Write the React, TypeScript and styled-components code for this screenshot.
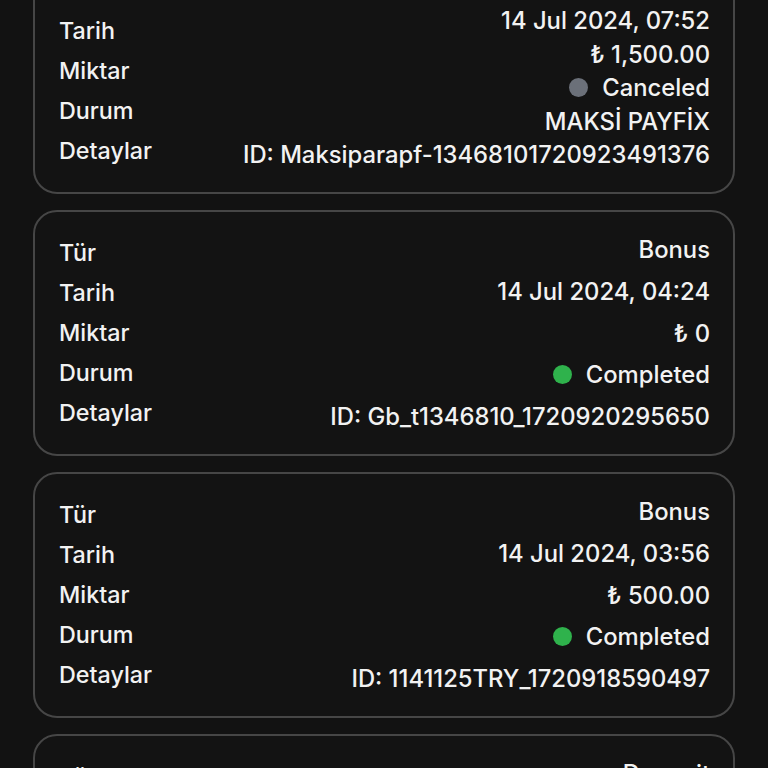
import React from "react";
import styled, { createGlobalStyle } from "styled-components";

const Global = createGlobalStyle`
  html, body { margin: 0; padding: 0; background: #121212; overflow: hidden; }
  body { font-family: Inter, "Noto Sans", "Liberation Sans", sans-serif; color: #f2f2f2; }
`;

const List = styled.div`
  display: flex;
  flex-direction: column;
  gap: 16px;
  padding: 0 33px;
  margin-top: -52px;
`;

const Card = styled.div`
  border: 2px solid #464646;
  border-radius: 24px;
  background: #131313;
  padding: 21px 23px 21px 24px;
  display: grid;
  grid-template-columns: auto 1fr;
`;

const Labels = styled.div`
  display: flex;
  flex-direction: column;
`;

const Label = styled.div`
  font-size: 23.3px;
  font-weight: 500;
  line-height: 40px;
  height: 40px;
`;

const Values = styled.div`
  display: flex;
  flex-direction: column;
  justify-content: space-between;
  align-items: flex-end;
`;

const Value = styled.div`
  font-size: 23.8px;
  font-weight: 500;
  line-height: 33px;
  display: flex;
  align-items: center;
  gap: 14px;
  white-space: nowrap;
`;

const Dot = styled.span<{ $color: string }>`
  width: 19px;
  height: 19px;
  border-radius: 50%;
  background: ${(p) => p.$color};
  display: inline-block;
`;

type Tx = {
  type: string;
  date: string;
  amount: string;
  status: "Completed" | "Canceled";
  method?: string;
  id: string;
};

const txs: Tx[] = [
  {
    type: "Withdrawal",
    date: "14 Jul 2024, 07:52",
    amount: "₺ 1,500.00",
    status: "Canceled",
    method: "MAKSİ PAYFİX",
    id: "ID: Maksiparapf-13468101720923491376",
  },
  {
    type: "Bonus",
    date: "14 Jul 2024, 04:24",
    amount: "₺ 0",
    status: "Completed",
    id: "ID: Gb_t1346810_1720920295650",
  },
  {
    type: "Bonus",
    date: "14 Jul 2024, 03:56",
    amount: "₺ 500.00",
    status: "Completed",
    id: "ID: 1141125TRY_1720918590497",
  },
  {
    type: "Deposit",
    date: "13 Jul 2024, 22:10",
    amount: "₺ 500.00",
    status: "Completed",
    id: "ID: 1141125TRY_1720898401122",
  },
];

export default function App() {
  return (
    <>
      <Global />
      <List>
        {txs.map((t, i) => (
          <Card key={i}>
            <Labels>
              <Label>Tür</Label>
              <Label>Tarih</Label>
              <Label>Miktar</Label>
              <Label>Durum</Label>
              <Label>Detaylar</Label>
            </Labels>
            <Values>
              <Value>{t.type}</Value>
              <Value>{t.date}</Value>
              <Value>{t.amount}</Value>
              <Value>
                <Dot $color={t.status === "Completed" ? "#2fb24c" : "#6b7079"} />
                {t.status}
              </Value>
              {t.method && <Value>{t.method}</Value>}
              <Value>{t.id}</Value>
            </Values>
          </Card>
        ))}
      </List>
    </>
  );
}
